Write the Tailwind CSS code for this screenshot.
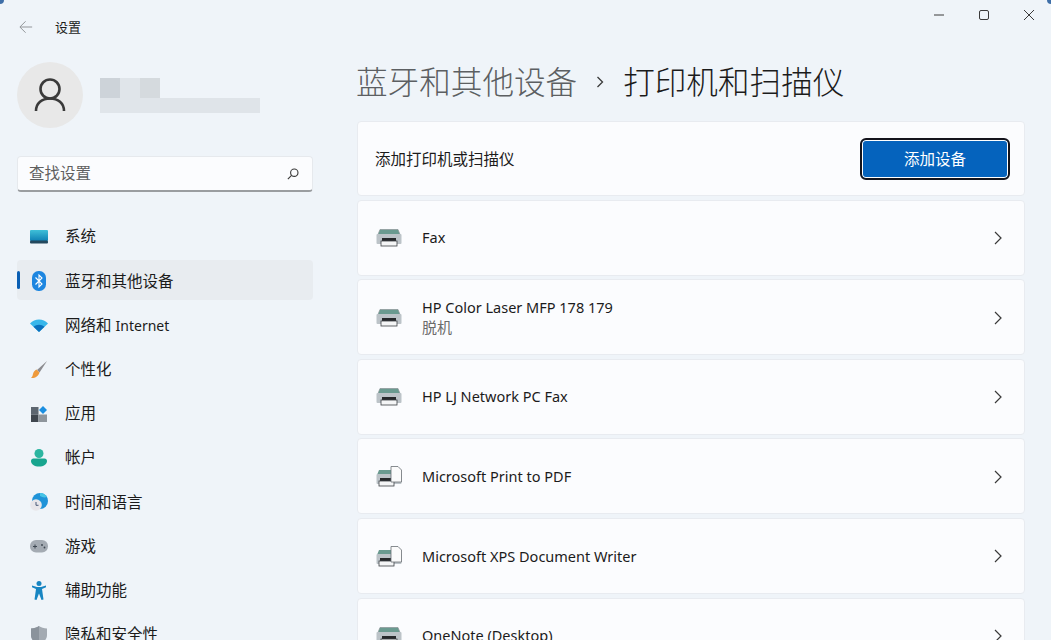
<!DOCTYPE html>
<html lang="zh-CN">

<head>
    <meta charset="UTF-8">
    <title>设置</title>
    <script src="https://cdn.jsdelivr.net/npm/@tailwindcss/browser@4"></script>
</head>

<body class="h-[640px] w-[1051px] overflow-hidden bg-[#eff4f9] font-['Noto_Sans','Noto_Sans_CJK_SC',sans-serif] text-[#1b1b1b]">
    <div class="relative flex h-[640px] items-start overflow-hidden">
        <!-- wallpaper peeking through the rounded window corners -->
        <div class="absolute left-0 top-0 h-[4px] w-[4px] rounded-br-[4px] bg-[#3f6fa8]"></div>
        <div class="absolute right-0 top-0 h-[4px] w-[4px] rounded-bl-[4px] bg-[#3f6fa8]"></div>

        <!-- sidebar -->
        <aside class="flex w-[357px] shrink-0 flex-col pl-[17px] pr-[44px]">
            <div class="flex h-[54px] items-center pl-[2px]">
                <svg class="h-[14px] w-[14px]" viewBox="0 0 16 16" fill="none" stroke="#8f9396" stroke-width="1.100">
                    <path d="M15 8H1.500M7.500 1.500 1 8l6.500 6.500" />
                </svg>
                <span class="ml-[22px] text-[13px] leading-none">设置</span>
            </div>

            <div class="mt-[8px] flex h-[66px] items-center">
                <div class="flex h-[66px] w-[66px] items-center justify-center rounded-full bg-[#e8e8e8]">
                    <svg class="h-[36px] w-[36px]" viewBox="0 0 36 36" fill="none" stroke="#3a3a3a" stroke-width="2.600">
                        <circle cx="18" cy="12" r="9.500" />
                        <path d="M4 34c0-8 6-12.500 14-12.500S32 26 32 34" />
                    </svg>
                </div>
                <div class="ml-[17px] flex flex-col">
                    <div class="flex h-[20px]">
                        <div class="w-[20px] bg-[#cdd3d9]"></div>
                        <div class="w-[20px] bg-[#e0e5ea]"></div>
                        <div class="w-[20px] bg-[#d5dade]"></div>
                    </div>
                    <div class="flex h-[15px] w-[160px]">
                        <div class="w-[60px] bg-[#e0e5ea]"></div>
                        <div class="w-[100px] bg-[#dfe4e9]"></div>
                    </div>
                </div>
            </div>

            <div class="mt-[28px] flex h-[36px] w-[296px] items-center justify-between rounded-[4px] border border-[#e6e9ed] border-b-[2px] border-b-[#9a9da0] bg-[#fbfcfe] pl-[11px] pr-[13px]">
                <span class="text-[15.5px] text-[#5f5f5f]">查找设置</span>
                <svg class="h-[12px] w-[12px]" viewBox="0 0 14 14" fill="none" stroke="#3a3a3a" stroke-width="1.300">
                    <circle cx="8.500" cy="5.500" r="4.300" />
                    <path d="M5.300 8.700 1 13" />
                </svg>
            </div>

            <nav class="mt-[23px] flex w-[296px] flex-col text-[15.5px]">
                <a class="flex h-[44.2px] items-center">
                    <span class="flex w-[48px] justify-center pr-[4px]">
                        <svg class="h-[14px] w-[20px]" viewBox="0 0 20 14">
                            <defs>
                                <linearGradient id="screen" x1="0" y1="0" x2="0" y2="1">
                                    <stop offset="0" stop-color="#3fc0d8" />
                                    <stop offset="1" stop-color="#0f80b4" />
                                </linearGradient>
                            </defs>
                            <rect x="1" y="0" width="18" height="11" rx="1" fill="url(#screen)" />
                            <rect x="1" y="10.500" width="18" height="3" rx="1" fill="#24495f" />
                        </svg>
                    </span>
                    <span>系统</span>
                </a>
                <a class="relative mt-[1.1px] mb-[3.1px] flex h-[40px] items-center rounded-[4px] bg-[#e8ecf0] pt-[2px]">
                    <span class="absolute left-0 top-[11px] h-[18px] w-[3px] rounded-full bg-[#0a5fb4]"></span>
                    <span class="flex w-[48px] justify-center pr-[4px]">
                        <svg class="h-[20px] w-[14px]" viewBox="0 0 14 20">
                            <rect x="0" y="0" width="14" height="20" rx="6.500" fill="#1d86e0" />
                            <path d="M3.500 6.500 10 13l-3 3V4l3 3-6.500 6.500" fill="none" stroke="#fff" stroke-width="1.100" />
                        </svg>
                    </span>
                    <span>蓝牙和其他设备</span>
                </a>
                <a class="flex h-[44.2px] items-center">
                    <span class="flex w-[48px] justify-center pr-[4px]">
                        <svg class="h-[13px] w-[18px]" viewBox="0 0 18 13">
                            <path d="M0 4.500C2.500 2 5.500.5 9 .5s6.500 1.500 9 4l-9 8.500z" fill="#38b6ea" />
                            <path d="M3.500 7.800C5 6.500 7 5.700 9 5.700s4 .8 5.500 2.100L9 12.900z" fill="#0a70bd" />
                        </svg>
                    </span>
                    <span>网络和 <span class="text-[14px]">Internet</span></span>
                </a>
                <a class="flex h-[44.2px] items-center">
                    <span class="flex w-[48px] justify-center pr-[4px]">
                        <svg class="h-[18px] w-[18px]" viewBox="0 0 18 18">
                            <path d="M17 0 7 9l2.500 2.500z" fill="#8c8c90" />
                            <path d="M6.500 8.500 9.500 11.500C8.500 15 5 17.500 1 17c2-1.500 1.500-3.500 2.500-5.500.7-1.300 1.800-2.500 3-3z" fill="#ee9a3c" />
                        </svg>
                    </span>
                    <span>个性化</span>
                </a>
                <a class="flex h-[44.2px] items-center">
                    <span class="flex w-[48px] justify-center pr-[4px]">
                        <svg class="h-[16px] w-[16px]" viewBox="0 0 16 16">
                            <rect x="0" y="1" width="7.500" height="7.500" fill="#5d6670" />
                            <rect x="0" y="8.500" width="7.500" height="7.500" fill="#3f464e" />
                            <rect x="8" y="8.500" width="8" height="7.500" fill="#8e959c" />
                            <path d="M12 0l4 4-4 4-4-4z" fill="#1b8ee0" />
                        </svg>
                    </span>
                    <span>应用</span>
                </a>
                <a class="flex h-[44.2px] items-center">
                    <span class="flex w-[48px] justify-center pr-[4px]">
                        <svg class="h-[18px] w-[16px]" viewBox="0 0 16 18">
                            <circle cx="8" cy="4.500" r="4.500" fill="#2bb5a0" />
                            <path d="M0 12c0-1.500 1-2.500 2.500-2.500h11C15 9.500 16 10.500 16 12c0 3.500-3.500 5.500-8 5.500S0 15.500 0 12z" fill="#18a58f" />
                        </svg>
                    </span>
                    <span>帐户</span>
                </a>
                <a class="flex h-[44.2px] items-center">
                    <span class="flex w-[48px] justify-center pr-[4px]">
                        <svg class="h-[18px] w-[18px]" viewBox="0 0 18 18">
                            <circle cx="10" cy="8" r="8" fill="#1f93d8" />
                            <path d="M10 0a8 8 0 0 1 7 4c-3 1-5 0-7-1z" fill="#46c4e6" />
                            <circle cx="6" cy="12" r="5.800" fill="#e8e6ea" />
                            <path d="M6 9v3.300h2.500" fill="none" stroke="#4a5a78" stroke-width="1" />
                        </svg>
                    </span>
                    <span>时间和语言</span>
                </a>
                <a class="flex h-[44.2px] items-center">
                    <span class="flex w-[48px] justify-center pr-[4px]">
                        <svg class="h-[13px] w-[18px]" viewBox="0 0 18 13">
                            <rect x="0" y="0" width="18" height="12.500" rx="6" fill="#a4abb3" />
                            <path d="M3 6.500h4M5 4.500v4" stroke="#3d4650" stroke-width="1" />
                            <circle cx="12" cy="5" r=".9" fill="#3d4650" />
                            <circle cx="14.500" cy="7.500" r=".9" fill="#3d4650" />
                        </svg>
                    </span>
                    <span>游戏</span>
                </a>
                <a class="flex h-[44.2px] items-center">
                    <span class="flex w-[48px] justify-center pr-[4px]">
                        <svg class="h-[19px] w-[14px]" viewBox="0 0 14 19">
                            <circle cx="7" cy="2.500" r="2.500" fill="#1785c2" />
                            <path d="M0 4.500 5 6h4l5-1.500.5 1.500L10 8l1.500 10.500-2 .5L7 12.500 4.500 19l-2-.5L4 8-.5 6z" fill="#1785c2" />
                        </svg>
                    </span>
                    <span>辅助功能</span>
                </a>
                <a class="flex h-[44.2px] items-center">
                    <span class="flex w-[48px] justify-center pr-[4px]">
                        <svg class="h-[18px] w-[16px]" viewBox="0 0 16 18">
                            <path d="M8 0c2 1.500 5 2.500 8 2.500V9c0 4.500-3.500 7.500-8 9-4.500-1.500-8-4.500-8-9V2.500C3 2.500 6 1.500 8 0z" fill="#a3aab2" />
                            <path d="M8 0v18C3.500 16.500 0 13.500 0 9V2.500C3 2.500 6 1.500 8 0z" fill="#8b939c" />
                        </svg>
                    </span>
                    <span>隐私和安全性</span>
                </a>
            </nav>
        </aside>

        <!-- main -->
        <main class="flex w-[668px] shrink-0 flex-col">
            <h1 class="-ml-px mt-[57px] flex h-[50px] items-center text-[31.6px] font-light leading-none">
                <span class="text-[#5c5f62]">蓝牙和其他设备</span>
                <svg class="mx-[17px] h-[12px] w-[12px]" viewBox="0 0 12 12" fill="none" stroke="#3a3a3a" stroke-width="1.300">
                    <path d="M3.500 1 8.500 6l-5 5" />
                </svg>
                <span>打印机和扫描仪</span>
            </h1>

            <div class="mt-[14px] flex flex-col gap-[3.6px]">
                <div class="flex h-[75px] items-center justify-between rounded-[4px] border border-[#e8ebf0] bg-[#fbfcfe] pl-[17px] pr-[14px]">
                    <span class="mt-[3px] text-[15.5px]">添加打印机或扫描仪</span>
                    <button class="flex h-[42px] w-[150px] items-center justify-center rounded-[6px] border-[2px] border-[#14141c] bg-[#0563bd] pt-[2px] text-[15.5px] text-white shadow-[inset_0_0_0_1px_#fff]">添加设备</button>
                </div>

                <div class="flex h-[76px] items-center rounded-[4px] border border-[#e8ebf0] bg-[#fbfcfe] pl-[18px] pr-[21px] pt-[1px]">
                    <svg class="h-[18px] w-[26px]" viewBox="0 0 26 18">
                        <path d="M4 .5h18l2 5H2z" fill="#6a9a90" stroke="#8a9496" stroke-width=".7" />
                        <rect x="0.500" y="5" width="25" height="10" rx="1" fill="#bcc3c8" />
                        <rect x="6" y="9" width="14" height="3" fill="#26282b" />
                        <rect x="5" y="12" width="16" height="5" fill="#f4f5f6" stroke="#3c4045" stroke-width=".8" />
                    </svg>
                    <span class="ml-[20px] flex-1 text-[14.5px]">Fax</span>
                    <svg class="h-[14px] w-[10px]" viewBox="0 0 10 14" fill="none" stroke="#3a3a3a" stroke-width="1.200">
                        <path d="M2 1l6 6-6 6" />
                    </svg>
                </div>

                <div class="flex h-[76px] items-center rounded-[4px] border border-[#e8ebf0] bg-[#fbfcfe] pl-[18px] pr-[21px] pt-[1px]">
                    <svg class="h-[18px] w-[26px]" viewBox="0 0 26 18">
                        <path d="M4 .5h18l2 5H2z" fill="#6a9a90" stroke="#8a9496" stroke-width=".7" />
                        <rect x="0.500" y="5" width="25" height="10" rx="1" fill="#bcc3c8" />
                        <rect x="6" y="9" width="14" height="3" fill="#26282b" />
                        <rect x="5" y="12" width="16" height="5" fill="#f4f5f6" stroke="#3c4045" stroke-width=".8" />
                    </svg>
                    <div class="ml-[20px] flex flex-1 flex-col">
                        <span class="text-[14.5px] leading-[20px]">HP Color Laser MFP 178 179</span>
                        <span class="text-[15px] leading-[21px] text-[#6b6b6b]">脱机</span>
                    </div>
                    <svg class="h-[14px] w-[10px]" viewBox="0 0 10 14" fill="none" stroke="#3a3a3a" stroke-width="1.200">
                        <path d="M2 1l6 6-6 6" />
                    </svg>
                </div>

                <div class="flex h-[76px] items-center rounded-[4px] border border-[#e8ebf0] bg-[#fbfcfe] pl-[18px] pr-[21px] pt-[1px]">
                    <svg class="h-[18px] w-[26px]" viewBox="0 0 26 18">
                        <path d="M4 .5h18l2 5H2z" fill="#6a9a90" stroke="#8a9496" stroke-width=".7" />
                        <rect x="0.500" y="5" width="25" height="10" rx="1" fill="#bcc3c8" />
                        <rect x="6" y="9" width="14" height="3" fill="#26282b" />
                        <rect x="5" y="12" width="16" height="5" fill="#f4f5f6" stroke="#3c4045" stroke-width=".8" />
                    </svg>
                    <span class="ml-[20px] flex-1 text-[14.5px]">HP LJ Network PC Fax</span>
                    <svg class="h-[14px] w-[10px]" viewBox="0 0 10 14" fill="none" stroke="#3a3a3a" stroke-width="1.200">
                        <path d="M2 1l6 6-6 6" />
                    </svg>
                </div>

                <div class="flex h-[76px] items-center rounded-[4px] border border-[#e8ebf0] bg-[#fbfcfe] pl-[18px] pr-[21px] pt-[1px]">
                    <svg class="h-[21px] w-[26px]" viewBox="0 0 26 21">
                        <path d="M3 4h15v5H1z" fill="#6a9a90" />
                        <rect x="0.500" y="8" width="25" height="10" rx="1" fill="#bcc3c8" />
                        <rect x="4" y="12" width="12" height="3" fill="#26282b" />
                        <rect x="3" y="15" width="15" height="5" fill="#f4f5f6" stroke="#3c4045" stroke-width=".8" />
                        <path d="M15 .5h7l3.500 3.500v12H15z" fill="#fbfbfb" stroke="#6a6f74" stroke-width=".8" />
                    </svg>
                    <span class="ml-[20px] flex-1 text-[14.5px]">Microsoft Print to PDF</span>
                    <svg class="h-[14px] w-[10px]" viewBox="0 0 10 14" fill="none" stroke="#3a3a3a" stroke-width="1.200">
                        <path d="M2 1l6 6-6 6" />
                    </svg>
                </div>

                <div class="flex h-[76px] items-center rounded-[4px] border border-[#e8ebf0] bg-[#fbfcfe] pl-[18px] pr-[21px] pt-[1px]">
                    <svg class="h-[21px] w-[26px]" viewBox="0 0 26 21">
                        <path d="M3 4h15v5H1z" fill="#6a9a90" />
                        <rect x="0.500" y="8" width="25" height="10" rx="1" fill="#bcc3c8" />
                        <rect x="4" y="12" width="12" height="3" fill="#26282b" />
                        <rect x="3" y="15" width="15" height="5" fill="#f4f5f6" stroke="#3c4045" stroke-width=".8" />
                        <path d="M15 .5h7l3.500 3.500v12H15z" fill="#fbfbfb" stroke="#6a6f74" stroke-width=".8" />
                    </svg>
                    <span class="ml-[20px] flex-1 text-[14.5px]">Microsoft XPS Document Writer</span>
                    <svg class="h-[14px] w-[10px]" viewBox="0 0 10 14" fill="none" stroke="#3a3a3a" stroke-width="1.200">
                        <path d="M2 1l6 6-6 6" />
                    </svg>
                </div>

                <div class="flex h-[76px] items-center rounded-[4px] border border-[#e8ebf0] bg-[#fbfcfe] pl-[18px] pr-[21px] pt-[1px]">
                    <svg class="h-[18px] w-[26px]" viewBox="0 0 26 18">
                        <path d="M4 .5h18l2 5H2z" fill="#6a9a90" stroke="#8a9496" stroke-width=".7" />
                        <rect x="0.500" y="5" width="25" height="10" rx="1" fill="#bcc3c8" />
                        <rect x="6" y="9" width="14" height="3" fill="#26282b" />
                        <rect x="5" y="12" width="16" height="5" fill="#f4f5f6" stroke="#3c4045" stroke-width=".8" />
                    </svg>
                    <span class="ml-[20px] flex-1 text-[14.5px]">OneNote (Desktop)</span>
                    <svg class="h-[14px] w-[10px]" viewBox="0 0 10 14" fill="none" stroke="#3a3a3a" stroke-width="1.200">
                        <path d="M2 1l6 6-6 6" />
                    </svg>
                </div>
            </div>
        </main>

        <!-- window controls lie over the page -->
        <div class="absolute right-0 top-0 flex h-[30px] items-center">
            <div class="flex w-[45px] justify-center">
                <svg class="h-[10px] w-[10px]" viewBox="0 0 10 10" stroke="#3a3a3a" stroke-width="1">
                    <path d="M0 5h10" />
                </svg>
            </div>
            <div class="flex w-[45px] justify-center">
                <svg class="h-[10px] w-[10px]" viewBox="0 0 10 10" fill="none" stroke="#3a3a3a" stroke-width="1">
                    <rect x=".5" y=".5" width="9" height="9" rx="1.500" />
                </svg>
            </div>
            <div class="flex w-[45px] justify-center">
                <svg class="h-[10px] w-[10px]" viewBox="0 0 10 10" stroke="#3a3a3a" stroke-width="1">
                    <path d="M0 0l10 10M10 0 0 10" />
                </svg>
            </div>
        </div>
    </div>
</body>

</html>
